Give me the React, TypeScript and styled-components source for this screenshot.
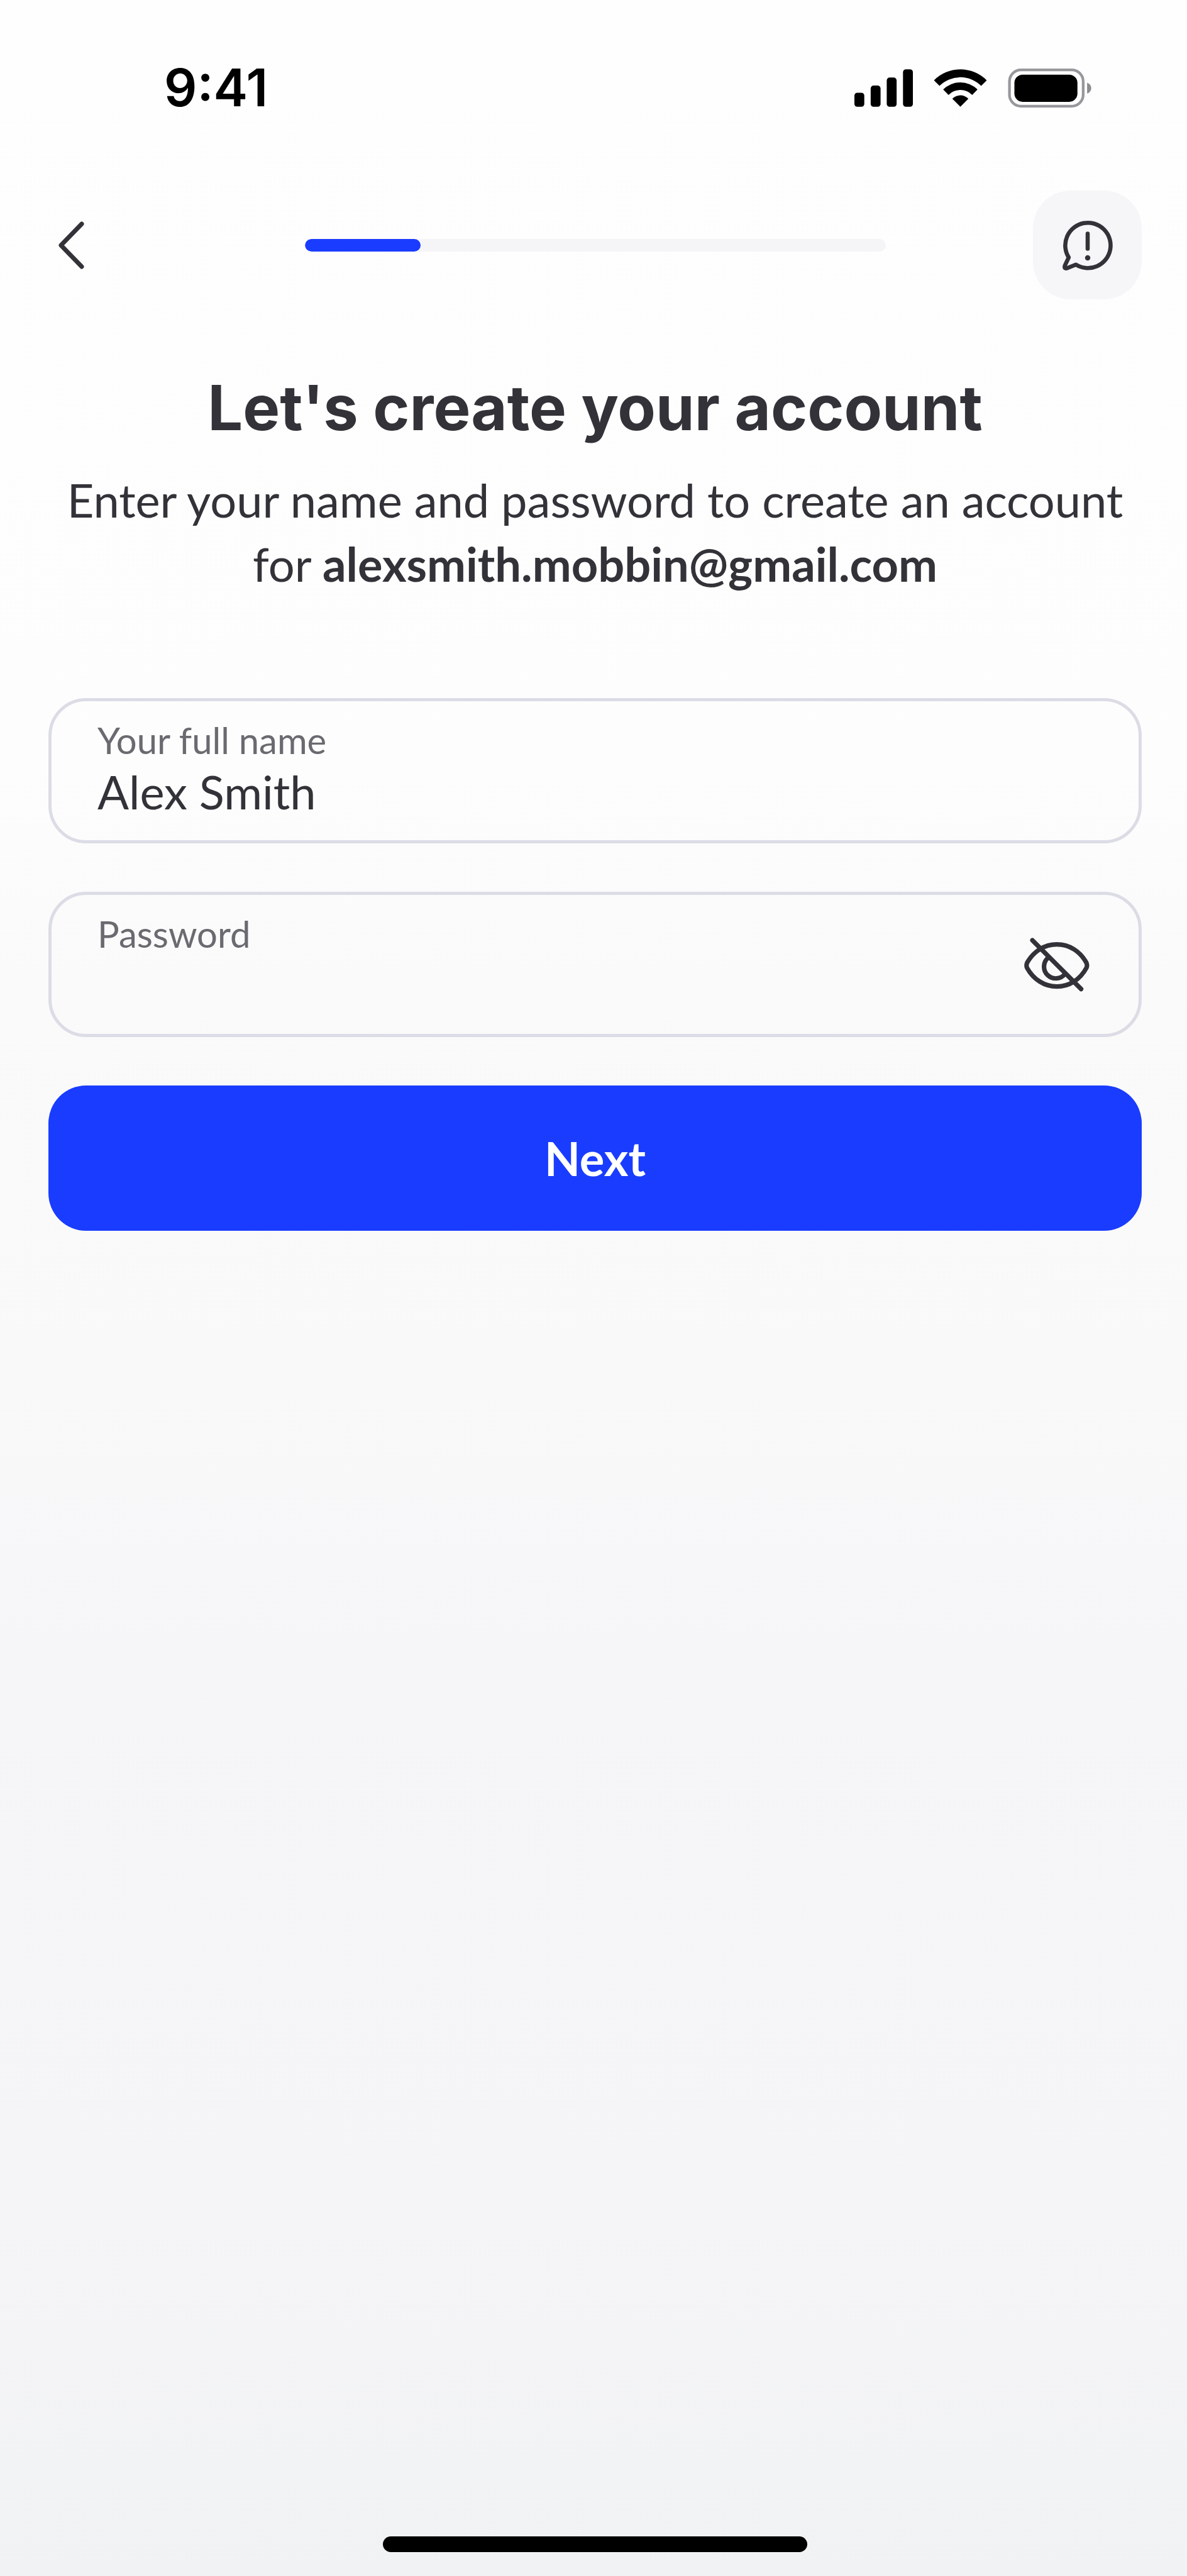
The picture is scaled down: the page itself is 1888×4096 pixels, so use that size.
import React, { useState } from "react";
import styled, { createGlobalStyle } from "styled-components";

const ink = "#323238";
const brand = "#1a3cff";
const bodyFont = `Lato, "Open Sans", sans-serif`;
const headingFont = `Inter, "Open Sans", sans-serif`;

const GlobalStyle = createGlobalStyle`
  *, *::before, *::after { box-sizing: border-box; }
  body { margin: 0; background: #fdfdfd; color: ${ink}; font-family: ${bodyFont}; }
  button, input { font: inherit; color: inherit; }
`;

const Screen = styled.div`
  display: flex;
  flex-direction: column;
  min-height: 100vh;
  padding: 0 72px 38px 77px;
  background: linear-gradient(
    180deg,
    #fefefe 0%,
    #fdfdfd 30%,
    #fafafa 38%,
    #f9f9f9 54%,
    #f6f6f9 64%,
    #f5f5f8 86%,
    #f2f3f5 96%,
    #f1f2f4 100%
  );
`;

const StatusBar = styled.div`
  display: flex;
  align-items: center;
  justify-content: space-between;
  height: 280px;
  padding: 0 80px 0 184px;
`;

const Clock = styled.time`
  font-family: ${headingFont};
  font-size: 82px;
  font-weight: 600;
  line-height: 96px;
  color: #000;
`;

const StatusIcons = styled.div`
  display: flex;
  align-items: center;
  gap: 33px;
`;

const Header = styled.header`
  display: grid;
  grid-template-columns: 173px minmax(0, 924px) 173px;
  align-items: center;
  justify-content: space-between;
  margin-top: 23px;
`;

const IconButton = styled.button<{ $filled?: boolean }>`
  display: flex;
  align-items: center;
  justify-content: ${(p) => (p.$filled ? "center" : "flex-start")};
  height: 173px;
  padding: ${(p) => (p.$filled ? "0" : "0 16px")};
  border: 0;
  border-radius: 60px;
  background: ${(p) => (p.$filled ? "#f6f6f9" : "transparent")};
  cursor: pointer;
`;

const Track = styled.div`
  height: 20px;
  border-radius: 10px;
  background: #f5f5f8;
  overflow: hidden;
`;

const Fill = styled.div`
  height: 100%;
  border-radius: 10px;
  background: ${brand};
`;

const Intro = styled.section`
  margin-top: 112px;
  text-align: center;
`;

const Title = styled.h1`
  margin: 0;
  font-family: ${headingFont};
  font-size: 99px;
  font-weight: 700;
  line-height: 120px;
`;

const Lead = styled.p`
  margin: 36px 0 0;
  font-size: 74px;
  line-height: 102px;
`;

const Strong = styled.strong`
  font-weight: 700;
`;

const Form = styled.form`
  display: flex;
  flex-direction: column;
  gap: 77px;
  margin-top: 162px;
`;

const Field = styled.div`
  display: flex;
  align-items: center;
  height: 231px;
  padding: 0 78px 0 73px;
  border: 5px solid #dcdce6;
  border-radius: 60px;
`;

const FieldText = styled.div`
  display: flex;
  flex: 1;
  flex-direction: column;
  min-width: 0;
  padding-bottom: 6px;
`;

const Label = styled.label`
  font-size: 58px;
  line-height: 72px;
  color: #6a6a70;
`;

const Input = styled.input`
  width: 100%;
  height: 92px;
  padding: 0;
  border: 0;
  outline: 0;
  background: transparent;
  font-size: 74px;
  line-height: 92px;
`;

const RevealButton = styled.button`
  display: flex;
  padding: 0;
  border: 0;
  background: transparent;
  cursor: pointer;
`;

const Submit = styled.button`
  height: 231px;
  border: 0;
  border-radius: 60px;
  background: ${brand};
  color: #fff;
  font-size: 74px;
  font-weight: 700;
  cursor: pointer;
`;

const HomeIndicator = styled.div`
  align-self: center;
  width: 675px;
  max-width: 60%;
  height: 25px;
  margin-top: auto;
  border-radius: 13px;
  background: #000;
`;

const SignalIcon = () => (
  <svg width="93" height="60" viewBox="64 66 284 182" aria-hidden="true">
    <rect x="64" y="180" width="48" height="68" rx="14" />
    <rect x="143" y="145" width="48" height="103" rx="14" />
    <rect x="221" y="106" width="48" height="142" rx="14" />
    <rect x="300" y="66" width="48" height="182" rx="14" />
  </svg>
);

const WifiIcon = () => (
  <svg width="85" height="60" viewBox="452 65 258 183" aria-hidden="true">
    <path d="M453 119A181 181 0 0 1 709 119L682 146A143 143 0 0 0 480 146Z" />
    <path d="M497.6 163.6A118 118 0 0 1 664.4 163.6L638.3 189.7A81 81 0 0 0 523.7 189.7Z" />
    <path d="M542 208A55 55 0 0 1 620 208L581 247Z" />
  </svg>
);

const BatteryIcon = () => (
  <svg width="133" height="64" viewBox="811 60 406 194" aria-hidden="true">
    <rect x="819" y="69" width="358" height="176" rx="56" fill="none" stroke="#97979c" strokeWidth="13" />
    <rect x="843" y="92" width="306" height="132" rx="40" />
    <path d="M1196 131Q1216 139 1216 157.500Q1216 176 1196 184Z" fill="#8c8c91" />
  </svg>
);

const BackIcon = () => (
  <svg width="42" height="76" viewBox="0 0 42 76" fill="none" aria-hidden="true">
    <path d="M37 4L4 38L37 72" stroke={ink} strokeWidth="7" strokeLinecap="round" strokeLinejoin="round" />
  </svg>
);

const HelpIcon = () => (
  <svg width="80" height="80" viewBox="179 160 244 244" fill="none" stroke={ink} strokeLinecap="round" strokeLinejoin="round" aria-hidden="true">
    <path d="M209 341A110 110 0 1 1 244 376L204 392Q184 399 191 379Z" strokeWidth="20" />
    <path d="M301 226V299" strokeWidth="20" />
    <circle cx="301" cy="343" r="13" fill={ink} stroke="none" />
  </svg>
);

const EyeOffIcon = () => (
  <svg width="104" height="86" viewBox="110 74 318 262" fill="none" stroke={ink} strokeWidth="22" strokeLinecap="round" strokeLinejoin="round" aria-hidden="true">
    <path d="M124 196C155 140 208 106 269 106S383 140 413 196Q418 208 413 220C383 276 330 311 269 311S155 276 124 220Q119 208 124 196Z" />
    <path d="M150 86L387 323" />
    <path d="M228 170A57 57 0 1 0 309 249" />
  </svg>
);

const progress = { step: 1, total: 5 };

export default function App() {
  const [name, setName] = useState("Alex Smith");
  const [password, setPassword] = useState("");
  const [visible, setVisible] = useState(false);

  return (
    <>
      <GlobalStyle />
      <Screen>
        <StatusBar>
          <Clock>9:41</Clock>
          <StatusIcons>
            <SignalIcon />
            <WifiIcon />
            <BatteryIcon />
          </StatusIcons>
        </StatusBar>
        <Header>
          <IconButton type="button" aria-label="Back">
            <BackIcon />
          </IconButton>
          <Track role="progressbar" aria-label="Sign-up progress" aria-valuemin={0} aria-valuemax={progress.total} aria-valuenow={progress.step}>
            <Fill style={{ width: `${(progress.step / progress.total) * 100}%` }} />
          </Track>
          <IconButton type="button" aria-label="Help" $filled>
            <HelpIcon />
          </IconButton>
        </Header>
        <Intro>
          <Title>Let's create your account</Title>
          <Lead>
            Enter your name and password to create an account
            <br />
            for <Strong>alexsmith.mobbin@gmail.com</Strong>
          </Lead>
        </Intro>
        <Form onSubmit={(e) => e.preventDefault()}>
          <Field>
            <FieldText>
              <Label htmlFor="full-name">Your full name</Label>
              <Input id="full-name" type="text" value={name} onChange={(e) => setName(e.target.value)} />
            </FieldText>
          </Field>
          <Field>
            <FieldText>
              <Label htmlFor="password">Password</Label>
              <Input id="password" type={visible ? "text" : "password"} value={password} onChange={(e) => setPassword(e.target.value)} />
            </FieldText>
            <RevealButton type="button" aria-label="Show password" aria-pressed={visible} onClick={() => setVisible(!visible)}>
              <EyeOffIcon />
            </RevealButton>
          </Field>
          <Submit type="submit">Next</Submit>
        </Form>
        <HomeIndicator />
      </Screen>
    </>
  );
}
